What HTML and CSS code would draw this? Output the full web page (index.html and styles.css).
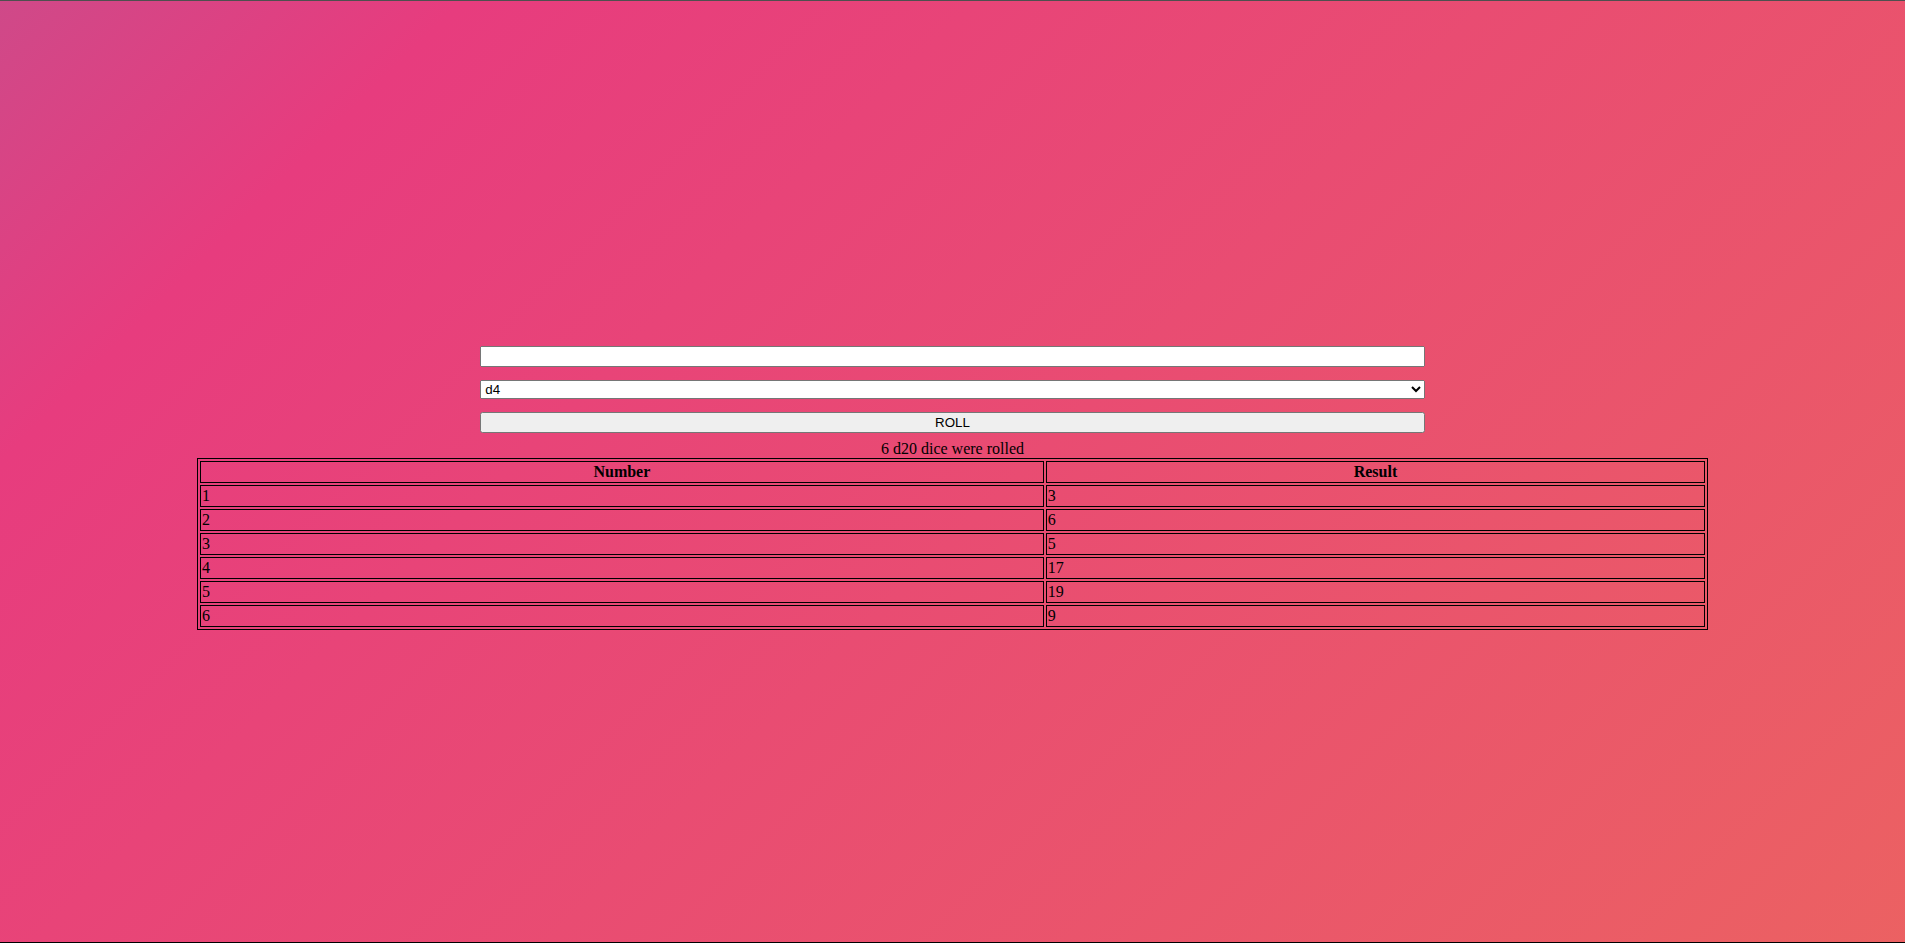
FILE: index.html
```html
<!DOCTYPE html>
<html lang="en">
<head>
<meta charset="utf-8">
<title>Dice Roller</title>
<link rel="stylesheet" href="styles.css">
</head>
<body>
<main class="app">
  <form class="controls">
    <input type="text" class="count" aria-label="Number of dice">
    <select class="die" aria-label="Die type">
      <option>d4</option>
      <option>d6</option>
      <option>d8</option>
      <option>d10</option>
      <option>d12</option>
      <option>d20</option>
      <option>d100</option>
    </select>
    <button type="button" class="roll">ROLL</button>
  </form>
  <table class="results">
    <caption>6 d20 dice were rolled</caption>
    <thead>
      <tr><th>Number</th><th>Result</th></tr>
    </thead>
    <tbody>
      <tr><td>1</td><td>3</td></tr>
      <tr><td>2</td><td>6</td></tr>
      <tr><td>3</td><td>5</td></tr>
      <tr><td>4</td><td>17</td></tr>
      <tr><td>5</td><td>19</td></tr>
      <tr><td>6</td><td>9</td></tr>
    </tbody>
  </table>
</main>
</body>
</html>
```
FILE: styles.css
```css
html {
  height: 100%;
  box-sizing: border-box;
  border-top: 1px solid #4f4f4f;
  border-bottom: 1px solid #000;
  background: linear-gradient(-45deg, #ee7752, #e73c7e, #23a6d5, #23d5ab);
  background-size: 400% 400%;
  background-position: 100% 50%;
}

body {
  margin: 8px;
  font-family: "Liberation Serif", "Times New Roman", serif;
  font-size: 16px;
  color: #000;
}

.app {
  padding-top: 337px;
}

.controls {
  display: flex;
  flex-direction: column;
  align-items: center;
  gap: 13px;
  margin: 0 0 7px;
}

.controls input,
.controls select,
.controls button {
  width: 50%;
  box-sizing: border-box;
  margin: 0;
  font-family: "Liberation Sans", Arial, sans-serif;
  font-size: 13.333px;
}

.count {
  height: 21px;
}

.die {
  height: 19px;
}

.roll {
  height: 21px;
}

.results {
  width: 80%;
  margin: 0 auto;
  border: 1px solid #000;
  border-spacing: 2px;
}

.results caption {
  text-align: center;
}

.results th,
.results td {
  border: 1px solid #000;
  padding: 1px;
}

.results td {
  text-align: left;
}
```
